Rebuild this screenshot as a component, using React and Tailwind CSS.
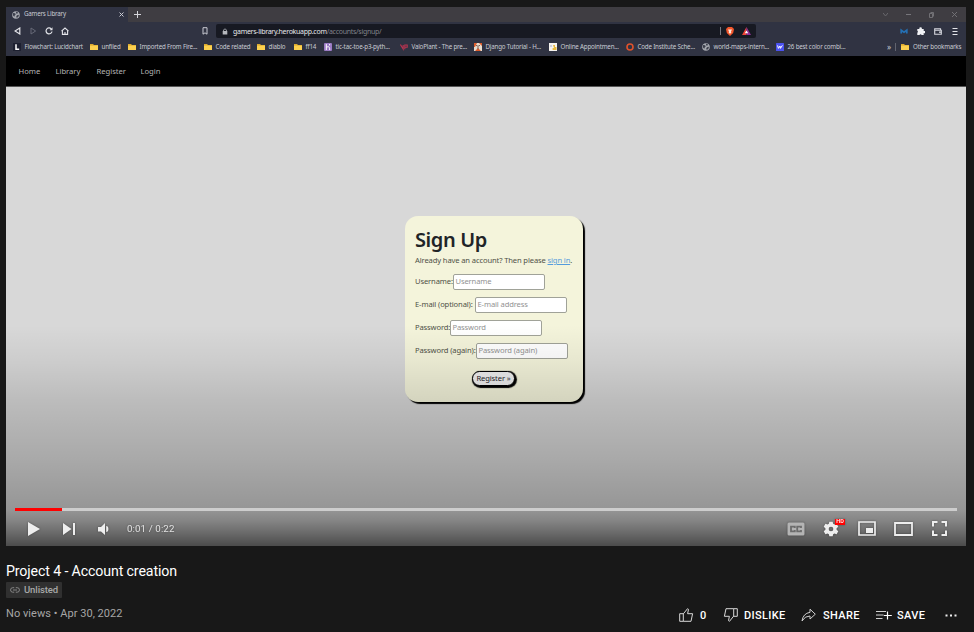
import React from 'react';

const ui = "font-['Noto_Sans',sans-serif]";

function Folder() {
  return (
    <svg viewBox="0 0 8 8" className="h-2 w-2 shrink-0">
      <path d="M0 1h3l1 1h4v5H0z" fill="#dca92f" />
      <path d="M0 2.6h8V7H0z" fill="#fdd14e" />
    </svg>
  );
}

function Globe() {
  return (
    <svg viewBox="0 0 8 8" className="h-2 w-2 shrink-0">
      <circle cx="4" cy="4" r="3.8" fill="#a4a7ae" />
      <path d="M1 2l2 .3.8 1L2.7 4.4l-.3 1.4L1 4.4zM4.2.8l2 .7-1 1.2-1.3-.5zM5 4.2l2-.5-.6 2L4.8 7l-.6-1.5z" fill="#3c3f4c" />
    </svg>
  );
}

const marks = {
  lucid: (
    <svg viewBox="0 0 8 8" className="h-2 w-2 shrink-0">
      <path d="M0 0h8v8H0z" fill="#1d2030" />
      <path d="M3 1.200v5h3.200" fill="none" stroke="#fff" strokeWidth="1.5" />
    </svg>
  ),
  folder: <Folder />,
  globe: <Globe />,
  heroku: (
    <svg viewBox="0 0 8 8" className="h-2 w-2 shrink-0">
      <rect width="8" height="8" rx="1" fill="#9b7bc4" />
      <path d="M2.3 1v6M2.3 4.2c3-1 3.4-.3 3.4 2.8M5.6 1v1.4" fill="none" stroke="#fff" strokeWidth="1" />
    </svg>
  ),
  valo: (
    <svg viewBox="0 0 8 8" className="h-2 w-2 shrink-0">
      <path d="M.4 1.5L3.2 6V2M4.8 6.2V2h2.4v2.2H5" fill="none" stroke="#b93450" strokeWidth="1.1" />
    </svg>
  ),
  django: (
    <svg viewBox="0 0 8 8" className="h-2 w-2 shrink-0">
      <path d="M0 0h8v8H0z" fill="#e9dccd" />
      <path d="M0 0h3L1 4H0zM5 0h3v3zM1 8l3-3 3 3z" fill="#dd5b2b" />
      <path d="M2 2.3l2 1 2-1M3 5h2" stroke="#755d54" fill="none" />
    </svg>
  ),
  online: (
    <svg viewBox="0 0 8 8" className="h-2 w-2 shrink-0">
      <path d="M0 0h8v8H0z" fill="#f6f3ee" />
      <path d="M4 2h2v2h1.5v3H3.6V5H5z" fill="#e8b93e" />
      <path d="M1 2h2v2H1z" fill="#cfcfda" />
    </svg>
  ),
  code: (
    <svg viewBox="0 0 8 8" className="h-2 w-2 shrink-0">
      <circle cx="4" cy="4" r="3" fill="none" stroke="#e0522c" strokeWidth="1.6" />
    </svg>
  ),
  w: (
    <svg viewBox="0 0 8 8" className="h-2 w-2 shrink-0">
      <rect width="8" height="8" rx=".6" fill="#4b52f0" />
      <path d="M1.6 2.4l.8 3L4 3l.4 2.4 2-3" fill="none" stroke="#fff" strokeWidth="1" />
    </svg>
  ),
};

const bookmarks = [
  ['lucid', 'Flowchart: Lucidchart', 'w-[77px]'],
  ['folder', 'unfiled', 'w-[38px]'],
  ['folder', 'Imported From Fire...', 'w-[76px]'],
  ['folder', 'Code related', 'w-[53px]'],
  ['folder', 'diablo', 'w-[37px]'],
  ['folder', 'ff14', 'w-[30px]'],
  ['heroku', 'tic-tac-toe-p3-pyth...', 'w-[76px]'],
  ['valo', 'ValoPlant - The pre...', 'w-[74px]'],
  ['django', 'Django Tutorial - H...', 'w-[75px]'],
  ['online', 'Online Appointmen...', 'w-[77px]'],
  ['code', 'Code Institute Sche...', 'w-[76px]'],
  ['globe', 'world-maps-intern...', 'w-[74px]'],
  ['w', '26 best color combi...', 'w-[76px]'],
];

function Browser() {
  return (
    <div className={`${ui} text-[#c9cbd3]`}>
      <div className="flex h-[15px] items-center bg-[#3f3d42]">
        <div className="flex h-full w-[122px] items-center bg-[#303342] pl-1.5">
          <Globe />
          <span className="ml-1 w-[95px] text-[6.200px] leading-none tracking-[-0.200px] whitespace-nowrap">Gamers Library</span>
          <svg viewBox="0 0 5 5" className="h-[5px] w-[5px]"><path d="M.5.5l4 4M4.5.5l-4 4" stroke="#c9cbd3" /></svg>
        </div>
        <svg viewBox="0 0 7 7" className="ml-[6px] h-[7px] w-[7px]"><path d="M3.5 0v7M0 3.5h7" stroke="#d5d5da" /></svg>
        <div className="ml-auto flex items-center gap-[18px] pr-[9px]">
          <svg viewBox="0 0 5 5" className="h-[5px] w-[5px]"><path d="M0 1l2.5 3L5 1" fill="none" stroke="#69686d" /></svg>
          <svg viewBox="0 0 5 5" className="h-[5px] w-[5px]"><path d="M0 2.5h5" stroke="#77767b" /></svg>
          <svg viewBox="0 0 5 6" className="h-[6px] w-[5px]"><path d="M.5 1.5h3v4h-3zM1.5.5h3v4" fill="none" stroke="#77767b" strokeWidth=".9" /></svg>
          <svg viewBox="0 0 5 5" className="h-[5px] w-[5px]"><path d="M0 0l5 5M5 0L0 5" stroke="#77767b" strokeWidth=".9" /></svg>
        </div>
      </div>
      <div className="flex h-[18px] items-center bg-[#303342] pl-2">
        <svg viewBox="0 0 7 8" className="h-2 w-[7px]"><path d="M5.8 1v6L1 4z" fill="none" stroke="#e3e4e9" strokeWidth="1.2" /></svg>
        <svg viewBox="0 0 7 8" className="ml-[9px] h-2 w-[7px]"><path d="M1 1v6l4.6-3z" fill="none" stroke="#666977" /></svg>
        <svg viewBox="0 0 8 8" className="ml-2 h-2 w-2"><path d="M6.2 1.8A3 3 0 1 0 7 4.5" fill="none" stroke="#e3e4e9" strokeWidth="1.2" /><path d="M7.5.2v3H4.6z" fill="#e3e4e9" /></svg>
        <svg viewBox="0 0 8 8" className="ml-2 h-2 w-2"><path d="M.5 4.2L4 1l3.5 3.2M1.4 3.8v3.6h5.2V3.8M4 7.3V5" fill="none" stroke="#e3e4e9" strokeWidth="1.1" /></svg>
        <svg viewBox="0 0 6 8" className="ml-[133px] h-2 w-[6px]"><path d="M1 .7h4v6.5L3 5.8 1 7.200z" fill="none" stroke="#c9cbd3" /></svg>
        <div className="ml-[8px] flex h-[14px] w-[540px] items-center rounded-[2px] bg-[#171922] pl-[6px]">
          <svg viewBox="0 0 6 7" className="h-[7px] w-[6px]"><path d="M.7 3h4.600v3.500H.7z" fill="#b5b7bd" /><path d="M1.600 3V1.800q1.400-1.800 2.800 0V3" fill="none" stroke="#b5b7bd" strokeWidth=".8" /></svg>
          <span className="ml-[5px] text-[7px] leading-none tracking-[-0.290px] whitespace-nowrap text-[#e6e7eb]">gamers-library.herokuapp.com<span className="text-[#80828a]">/accounts/signup/</span></span>
          <div className="ml-auto h-2 w-px bg-[#777982]" />
          <svg viewBox="0 0 8 9" className="ml-[5px] h-[9px] w-2"><path d="M2 0h4l2 2-.8 4L4 9 .8 6 0 2z" fill="#f1562b" /><path d="M2 2.500h4L5 4.500l.3 1.200L4 6.800l-1.300-1.100.3-1.200z" fill="#ffe9de" /></svg>
          <svg viewBox="0 0 9 8" className="mr-[5px] ml-[8px] h-2 w-[9px]"><path d="M4.500 0L0 8h4.500z" fill="#ef4335" /><path d="M4.500 0L9 8H4.500z" fill="#8e2f96" /><path d="M4.500 3.500L2.800 6.200h3.400z" fill="#fff" /></svg>
        </div>
        <div className="ml-auto flex items-center gap-[9px] pr-[7px]">
          <svg viewBox="0 0 8 7" className="h-[7px] w-2"><path d="M1.200 5.600V2.200L4 4.300l2.800-2.100v3.400" fill="none" stroke="#2470b4" strokeWidth="1.700" /></svg>
          <svg viewBox="0 0 8 8" className="h-2 w-2"><path d="M.3 2h2.200a1.200 1.200 0 1 1 2.200 0h2v2.100a1.100 1.100 0 1 1 0 2V8H4.600a1.100 1.100 0 0 0-2.100 0H.3V5.800a1.100 1.100 0 0 0 0-2z" fill="#f0f1f5" /></svg>
          <svg viewBox="0 0 8 7" className="h-[7px] w-2"><path d="M6.500 2.200V.8H.7v5.400h6.600V2.200H1" fill="none" stroke="#d6d8df" strokeWidth="1.100" /><path d="M5 3.500h2.300v1.300H5z" fill="#d6d8df" /></svg>
          <svg viewBox="0 0 8 7" className="h-[7px] w-2"><path d="M1.500.5h5M1.500 3.500h5M1.500 6.500h5" stroke="#e3e4e9" /></svg>
        </div>
      </div>
      <div className="flex h-[16px] items-start bg-[#303342] pt-[3px] pl-[7px]">
        {bookmarks.map(([icon, label, w]) => (
          <div key={label} className={`flex h-2 shrink-0 items-center gap-[3.500px] ${w}`}>
            {marks[icon]}
            <span className="text-[6.200px] leading-[8px] tracking-[-0.180px] whitespace-nowrap">{label}</span>
          </div>
        ))}
        <div className="ml-auto flex h-2 items-center gap-[5px] pr-[6px]">
          <span className="-mt-px text-[8px] leading-none">»</span>
          <div className="-ml-px h-2 w-px bg-[#62646f]" />
          <Folder />
          <span className="-ml-px w-[47px] text-[6.200px] leading-[8px] tracking-[-0.200px] whitespace-nowrap">Other bookmarks</span>
        </div>
      </div>
    </div>
  );
}

function Field({ label, hint, w }) {
  return (
    <div className="mt-[7px] flex h-[16px] items-center">
      <span className={`shrink-0 whitespace-nowrap ${w}`}>{label}</span>
      <div className="flex h-[16px] w-[92px] items-center rounded-[2px] border border-[#a0a298] bg-white pl-[1.500px] whitespace-nowrap text-[#929292]">{hint}</div>
    </div>
  );
}

function SignUp() {
  return (
    <div className={`${ui} mt-[129px] ml-[399px] h-[186px] w-[178px] rounded-[13px] bg-[#f4f4db] pl-[10px] text-[7.600px] leading-none tracking-[-0.130px] text-[#4f5147] shadow-[2px_2px_1px_0px_#000]`}>
      <h1 className="pt-[13px] text-[20px] leading-[22px] font-semibold tracking-[-0.400px] whitespace-nowrap text-[#212427]">Sign Up</h1>
      <p className="mt-[5px] mb-[10px] h-2 leading-[8px] whitespace-nowrap">Already have an account? Then please <span className="text-[#549bdc] underline">sign in</span>.</p>
      <Field label="Username:" hint="Username" w="w-[38px]" />
      <Field label="E-mail (optional):" hint="E-mail address" w="w-[60px]" />
      <Field label="Password:" hint="Password" w="w-[35px]" />
      <Field label="Password (again):" hint="Password (again)" w="w-[61px]" />
      <div className="mt-[12px] ml-[57px] flex h-[15px] w-[43px] items-center justify-center rounded-full border border-black bg-[#efefef] whitespace-nowrap text-[#27272b] shadow-[1px_1px_1px_1px_#000]">Register »</div>
    </div>
  );
}

function Controls() {
  return (
    <div className="px-[9px] pt-[501px]">
      <div className="flex h-[3px] bg-[#cdcdcd]"><div className="h-[3px] w-[47px] bg-[#f00]" /></div>
      <div className="flex h-[35px] items-center pl-[13px] drop-shadow-[0_0_1px_rgba(0,0,0,0.35)]">
        <svg viewBox="0 0 12 14" className="h-[14px] w-3"><path d="M0 0l12 7-12 7z" fill="#eee" /></svg>
        <svg viewBox="0 0 12 12" className="ml-[23px] h-3 w-3"><path d="M0 0l8.500 6L0 12zM10 0h2v12h-2z" fill="#eee" /></svg>
        <svg viewBox="0 0 11 12" className="ml-[23px] h-3 w-[11px]"><path d="M0 4h3l4-4v12L3 8.500H0zM8.200 3q2.200 0 2.200 3T8.200 9z" fill="#eee" /></svg>
        <span className="ml-[18px] font-[Roboto,sans-serif] text-[9.700px] leading-none tracking-[0.120px] whitespace-nowrap text-[#e2e2e2]">0:01 / 0:22</span>
        <div className="ml-auto flex h-[18px] items-center pr-[10.500px]">
          <svg viewBox="0 0 18 14" className="h-[14px] w-[18px]"><rect width="17" height="13" x=".5" y=".5" rx="1.500" fill="#b4b4b4" /><path d="M7.800 6V4.700H4v4.600h3.800V8M14 6V4.700h-3.800v4.600H14V8" fill="none" stroke="#6c6c6c" strokeWidth="1.800" /></svg>
          <div className="relative ml-[18.500px] h-4 w-4">
            <svg viewBox="0 0 24 24" className="h-4 w-4"><path fill="#eee" fillRule="evenodd" d="M9.500 0h5l.7 3.300 2 1.100 3.200-1.100 2.500 4.300-2.500 2.200v2.400l2.500 2.200-2.500 4.300-3.200-1.100-2 1.100-.7 3.300h-5l-.7-3.300-2-1.100-3.200 1.100-2.500-4.300 2.500-2.200V9.800L1.100 7.600l2.500-4.300 3.200 1.100 2-1.100zM12 7.500a3.500 3.500 0 1 0 0 7 3.500 3.500 0 0 0 0-7z" transform="translate(0 1)" /></svg>
            <span className="absolute -top-[2px] left-[12px] flex h-[6px] w-[10px] items-center justify-center bg-[#f00] font-[Roboto,sans-serif] text-[5.500px] leading-none font-medium text-white">HD</span>
          </div>
          <svg viewBox="0 0 18 15" className="ml-[18.500px] h-[15px] w-[18px]"><path d="M1 1h16v13H1z" fill="none" stroke="#eee" strokeWidth="1.700" /><path d="M8 7h7v5H8z" fill="#eee" /></svg>
          <svg viewBox="0 0 19 14" className="ml-[18px] h-[14px] w-[19px]"><path d="M1 1h17v12H1z" fill="none" stroke="#eee" strokeWidth="1.800" /></svg>
          <svg viewBox="0 0 15 15" className="ml-[19px] h-[15px] w-[15px]"><path d="M1 5.500V1h4.500M9.500 1H14v4.500M14 9.500V14H9.500M5.500 14H1V9.500" fill="none" stroke="#eee" strokeWidth="2" /></svg>
        </div>
      </div>
    </div>
  );
}

function Details() {
  const label = 'text-[11px] leading-none font-medium tracking-[0.350px] whitespace-nowrap text-white';
  return (
    <div className="pt-[17px] pl-[6px] font-[Roboto,sans-serif]">
      <h2 className="text-[14.200px] leading-[16px] tracking-[-0.130px] whitespace-nowrap text-white">Project 4 - Account creation</h2>
      <div className="mt-[3px] flex h-4 w-[56px] items-center rounded-[1px] bg-[#303030] pl-1">
        <svg viewBox="0 0 10 6" className="h-[6px] w-[10px]"><path d="M4.200.700H2.800a2.200 2.200 0 0 0 0 4.500h1.400M5.800.700h1.400a2.200 2.200 0 0 1 0 4.500H5.800M3 3h4" fill="none" stroke="#8f8f8f" strokeWidth=".9" /></svg>
        <span className="ml-1 text-[9.500px] leading-none font-medium tracking-[-0.100px] text-[#a8a8a8]">Unlisted</span>
      </div>
      <div className="flex h-[34px] items-center">
        <span className="pb-[3px] text-[11px] leading-none tracking-[0.040px] whitespace-nowrap text-[#a6a6a6]">No views • Apr 30, 2022</span>
        <div className="ml-auto flex items-center pr-[17px]">
          <svg viewBox="0 0 15 14" className="h-[14px] w-[15px]"><path d="M.7 5.700h3.600v7.600H.7zM4.300 5.900L8.500.7l1 .7-.9 4.300h5L12 13.300H4.300" fill="none" stroke="#d8d8d8" strokeWidth="1" /></svg>
          <span className={`${label} ml-[6px] w-[9px]`}>0</span>
          <svg viewBox="0 0 15 14" className="ml-[14px] h-[14px] w-[15px]"><path d="M14.300 8.300h-3.600V.7h3.600zM10.700 8.100L6.500 13.300l-1-.7.900-4.300h-5L3 .7h7.700" fill="none" stroke="#d8d8d8" strokeWidth="1" /></svg>
          <span className={`${label} ml-[6px] w-[42px]`}>DISLIKE</span>
          <svg viewBox="0 0 15 14" className="ml-[15px] h-[14px] w-[15px]"><path d="M9 1.200l5.300 5L9 11V8Q4 7.800 1 13 2 5.500 9 4.300z" fill="none" stroke="#d0d0d0" strokeWidth="1" /></svg>
          <span className={`${label} ml-[7px] w-[37px]`}>SHARE</span>
          <svg viewBox="0 0 16 10" className="ml-4 h-[10px] w-4"><path d="M0 1.500h10M0 5h7.500M0 8.500h6.500" stroke="#d0d0d0" /><path d="M11.500 1.500v8M7.800 5.500h8" stroke="#fff" strokeWidth="1.200" /></svg>
          <span className={`${label} ml-[5px] w-[29px]`}>SAVE</span>
          <svg viewBox="0 0 12 3" className="ml-[19px] h-[3px] w-3"><path d="M.500 1.500h2M5 1.500h2M9.500 1.500h2" stroke="#eee" strokeWidth="1.800" /></svg>
        </div>
      </div>
    </div>
  );
}

export default function App() {
  return (
    <div className="h-[632px] w-[974px] overflow-hidden bg-[#181818] pt-[7px]">
      <div className="relative ml-[6px] h-[539px] w-[960px] overflow-hidden bg-[#d8d8d8]">
        <Browser />
        <nav className={`${ui} flex h-[31px] items-center border-b border-[#555] bg-black pt-[2px] pl-[12.500px] text-[7.700px] leading-none tracking-[-0.050px] text-[#b5b5b5]`}>
          <span className="w-[37px]">Home</span>
          <span className="w-[41px]">Library</span>
          <span className="w-[44px]">Register</span>
          <span>Login</span>
        </nav>
        <SignUp />
        <div className="absolute inset-0 bg-[linear-gradient(to_bottom,transparent_318px,rgba(0,0,0,0.050)_353px,rgba(0,0,0,0.130)_393px,rgba(0,0,0,0.220)_453px,rgba(0,0,0,0.285)_490px,rgba(0,0,0,0.310)_503px,rgba(0,0,0,0.380)_513px,rgba(0,0,0,0.480)_523px,rgba(0,0,0,0.650)_539px)]">
          <Controls />
        </div>
      </div>
      <Details />
    </div>
  );
}
